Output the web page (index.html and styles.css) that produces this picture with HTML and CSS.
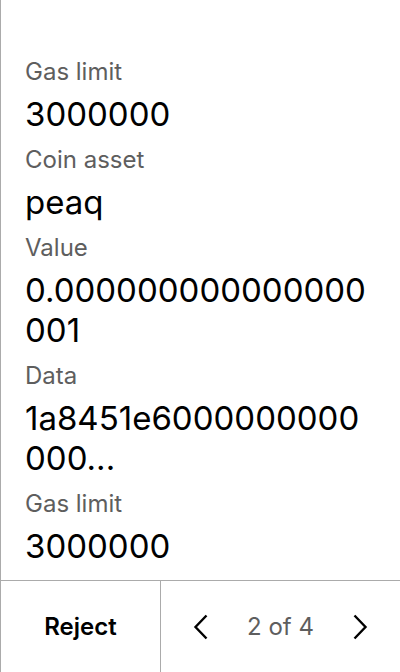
FILE: index.html
```html
<!DOCTYPE html>
<html lang="en">
<head>
<meta charset="utf-8">
<title>Transaction details</title>
<link rel="stylesheet" href="styles.css">
</head>
<body>
<div class="screen">
  <div class="content">
    <div class="field">
      <div class="label">Gas limit</div>
      <div class="value">3000000</div>
    </div>
    <div class="field">
      <div class="label">Coin asset</div>
      <div class="value">peaq</div>
    </div>
    <div class="field">
      <div class="label">Value</div>
      <div class="value">0.000000000000000001</div>
    </div>
    <div class="field">
      <div class="label">Data</div>
      <div class="value">1a8451e6000000000000...</div>
    </div>
    <div class="field">
      <div class="label">Gas limit</div>
      <div class="value">3000000</div>
    </div>
  </div>
  <div class="footer">
    <button class="reject" type="button">Reject</button>
    <div class="pager">
      <svg class="chev" width="24" height="28" viewBox="0 0 24 28" aria-hidden="true"><path d="M17.5 2.5 L6.5 14 L17.5 25.5" fill="none" stroke="#000" stroke-width="2.4"/></svg>
      <span class="count">2 of 4</span>
      <svg class="chev" width="24" height="28" viewBox="0 0 24 28" aria-hidden="true"><path d="M6.5 2.5 L17.5 14 L6.5 25.5" fill="none" stroke="#000" stroke-width="2.4"/></svg>
    </div>
  </div>
</div>
</body>
</html>
```

FILE: styles.css
```css
* { box-sizing: border-box; }
html, body { margin: 0; padding: 0; background: #fff; }
body { font-family: Inter, "Noto Sans", sans-serif; color: #000; }
.screen {
  width: 400px;
  height: 672px;
  border-left: 1px solid #ababab;
  display: flex;
  flex-direction: column;
  overflow: hidden;
}
.content {
  flex: 1;
  padding: 57px 24px 0 24px;
  display: flex;
  flex-direction: column;
  gap: 11px;
  overflow: hidden;
}
.field { display: flex; flex-direction: column; gap: 8px; }
.label {
  font-size: 24px;
  line-height: 29px;
  color: #5e5e5e;
}
.value {
  font-size: 33px;
  line-height: 40px;
  color: #000;
  word-break: break-all;
}
.footer {
  height: 92px;
  flex: none;
  border-top: 1px solid #ababab;
  display: flex;
}
.reject {
  width: 160px;
  border: 0;
  border-right: 1px solid #ababab;
  background: #fff;
  font-family: inherit;
  font-size: 24px;
  font-weight: 600;
  color: #000;
  padding: 0;
}
.pager {
  flex: 1;
  display: flex;
  align-items: center;
  justify-content: space-between;
  padding: 0 28px;
}
.chev { display: block; }
.count { font-size: 24px; color: #5e5e5e; }
```
